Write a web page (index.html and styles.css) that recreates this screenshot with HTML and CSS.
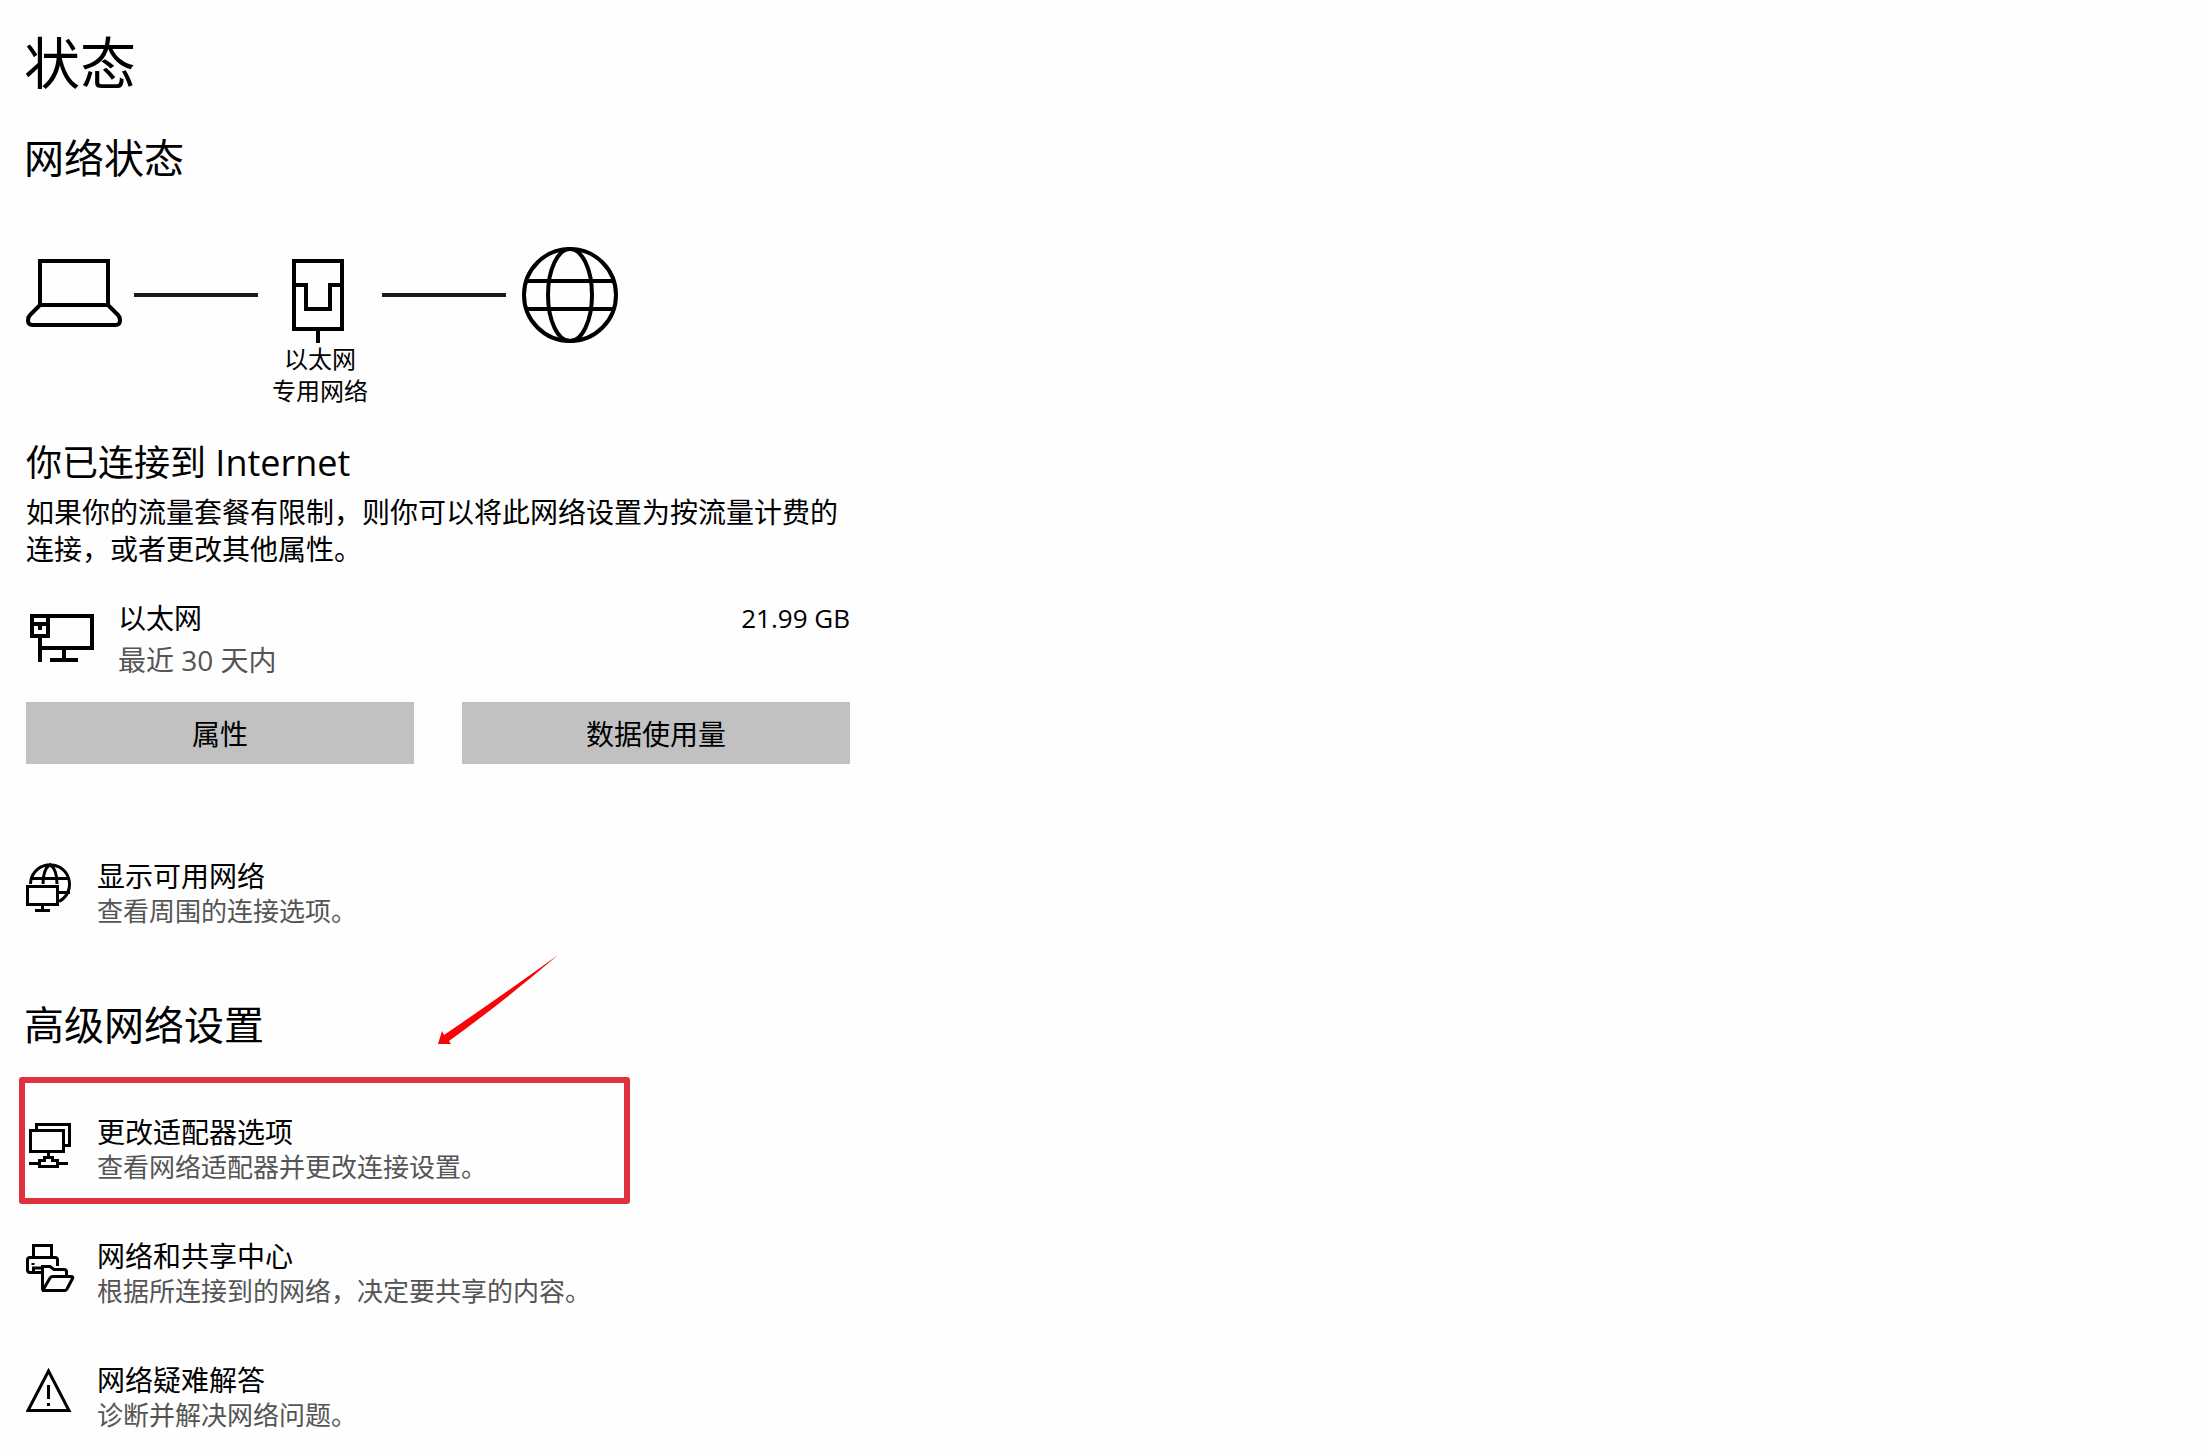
FILE: index.html
```html
<!DOCTYPE html>
<html lang="zh-CN">
<head>
<meta charset="utf-8">
<meta name="viewport" content="width=device-width, initial-scale=1">
<title>状态</title>
<link rel="stylesheet" href="styles.css">
</head>
<body>
<main class="page">
  <h1 class="page-title">状态</h1>

  <section class="status">
    <h2 class="section-title">网络状态</h2>

    <div class="diagram">
      <svg class="node-icon" width="96" height="96" viewBox="0 0 96 96" aria-hidden="true">
        <path d="M14 58V14h68v44M14 58h68l10 10Q94 70 94 73.500Q94 78 89.500 78H6.500Q2 78 2 73.500Q2 70 4 68z"/>
      </svg>
      <span class="wire"></span>
      <div class="node">
        <svg class="node-icon" width="96" height="96" viewBox="0 0 96 96" aria-hidden="true">
          <path d="M22 14h48v68H22zM22 38h12v24h24V38h12M46 82v14"/>
        </svg>
        <span>以太网</span>
        <span>专用网络</span>
      </div>
      <span class="wire"></span>
      <svg class="node-icon" width="104" height="96" viewBox="0 0 104 96" aria-hidden="true">
        <circle cx="52" cy="48" r="46"/>
        <ellipse cx="52" cy="48" rx="22" ry="46"/>
        <path d="M9 34h86M9 62h86"/>
      </svg>
    </div>

    <h3 class="connected">你已连接到 Internet</h3>
    <p class="hint">如果你的流量套餐有限制，则你可以将此网络设置为按流量计费的连接，或者更改其他属性。</p>

    <div class="usage">
      <svg class="usage-icon" width="72" height="84" viewBox="0 0 72 84" aria-hidden="true">
        <path d="M22 19h44v32H14M6 19h16v20H6zM6 27h16M14 27v6M14 39v26M38 51v12M24 63h28"/>
      </svg>
      <div class="usage-text">
        <span>以太网</span>
        <span class="muted">最近 30 天内</span>
      </div>
      <span class="usage-total">21.99 GB</span>
    </div>

    <div class="actions">
      <button type="button" class="button">属性</button>
      <button type="button" class="button">数据使用量</button>
    </div>
  </section>

  <a class="item" href="#networks">
    <svg class="item-icon" width="50" height="56" viewBox="0 0 50 56" aria-hidden="true">
      <path d="M4.500 26A19.500 19.500 0 1 1 33 43.500M17 26C17 17 19 10 24 6.500C29 10 31 17 31 26M5 20.500h38M33 34.500h11"/>
      <path d="M1.500 28.500h30v18h-30zM16.500 46v6M9 52.500h15"/>
    </svg>
    <span class="item-text">
      <span class="item-title">显示可用网络</span>
      <span class="item-desc">查看周围的连接选项。</span>
    </span>
  </a>

  <section class="advanced">
    <h2 class="section-title">高级网络设置</h2>
    <svg class="arrow" width="122" height="92" viewBox="0 0 122 92" aria-hidden="true">
      <path d="M1 90L5 77L7 81Q60 45 121 1Q66 48 12 87L14 90z"/>
    </svg>

    <nav class="items">
      <a class="item highlighted" href="#adapter">
        <svg class="item-icon" width="50" height="56" viewBox="0 0 50 56" aria-hidden="true">
          <path d="M10.500 16V10.500h33v21H38M4.500 16.500h33v21h-33zM22.500 37v6M3 49.500h10M33 49.500h9M13.500 46.500h5v-3h8v3h5v6h-18z"/>
        </svg>
        <span class="item-text">
          <span class="item-title">更改适配器选项</span>
          <span class="item-desc">查看网络适配器并更改连接设置。</span>
        </span>
      </a>
      <a class="item" href="#sharing">
        <svg class="item-icon" width="50" height="56" viewBox="0 0 50 56" aria-hidden="true">
          <path d="M7.500 19V7.500h18V19M16 34.500H4Q1.500 34.500 1.500 32V22Q1.500 19.500 4 19.500H29Q31.500 19.500 31.500 22V28M16 30H7.500V34M7 25v2"/>
          <path d="M16.500 52.500V28.500H24L28 31.500H38Q40.500 31.500 40.500 34V38M17 52L24 40Q25 38.500 27 38.500H45Q47.500 38.500 46.500 40.500L41 51Q40 52.500 38.500 52.500H16"/>
        </svg>
        <span class="item-text">
          <span class="item-title">网络和共享中心</span>
          <span class="item-desc">根据所连接到的网络，决定要共享的内容。</span>
        </span>
      </a>
      <a class="item" href="#troubleshoot">
        <svg class="item-icon" width="50" height="56" viewBox="0 0 50 56" aria-hidden="true">
          <path d="M22.500 9L43 48.500H2zM22.500 23v14M22.500 41v3"/>
        </svg>
        <span class="item-text">
          <span class="item-title">网络疑难解答</span>
          <span class="item-desc">诊断并解决网络问题。</span>
        </span>
      </a>
    </nav>
  </section>
</main>
</body>
</html>
```
FILE: styles.css
```css
*,
*::before {
  box-sizing: border-box;
}

body {
  margin: 0;
  background: #fefefe;
  color: #000;
  font-family: "Open Sans", "Noto Sans CJK SC", sans-serif;
  font-size: 28px;
}

h1,
h2,
h3,
p {
  margin: 0;
  font-weight: 400;
}

svg {
  display: block;
  flex: none;
  fill: none;
  stroke: #000;
}

.page {
  max-width: 876px;
  padding: 24px 26px 20px;
}

.page-title,
.section-title {
  margin-left: -2px;
}

.page-title {
  font-size: 56px;
  line-height: 76px;
}

.section-title {
  font-size: 40px;
  line-height: 56px;
}

.status .section-title {
  margin-top: 30px;
}

.diagram {
  display: flex;
  align-items: flex-start;
  gap: 12px;
  margin-top: 61px;
}

.node-icon {
  stroke-width: 4px;
}

.node {
  display: flex;
  flex-direction: column;
  align-items: center;
  width: 100px;
  font-size: 24px;
  line-height: 32px;
}

.wire {
  width: 124px;
  height: 4px;
  margin-top: 46px;
  background: #1a1a1a;
}

.connected {
  margin-top: 32px;
  font-size: 36px;
  line-height: 48px;
}

.hint {
  margin-top: 7px;
  line-height: 37px;
}

.usage {
  display: flex;
  gap: 20px;
  margin-top: 29px;
  line-height: 42px;
}

.usage-icon {
  stroke-width: 4px;
}

.usage-text {
  display: flex;
  flex: 1;
  flex-direction: column;
}

.usage-total {
  font-size: 26px;
}

.muted {
  color: #555;
}

.actions {
  display: grid;
  grid-template-columns: 1fr 1fr;
  gap: 48px;
  margin-top: 21px;
}

.button {
  height: 62px;
  padding: 0;
  border: 0;
  background: #c1c1c1;
  color: #000;
  font: inherit;
}

.item {
  position: relative;
  display: flex;
  gap: 21px;
  color: #000;
  text-decoration: none;
}

.status + .item {
  margin-top: 94px;
}

.item-icon {
  stroke-width: 3px;
}

.item-text {
  display: flex;
  flex-direction: column;
}

.item-title {
  line-height: 36px;
}

.item-desc {
  color: #555;
  font-size: 26px;
  line-height: 34px;
}

.advanced {
  position: relative;
  margin-top: 69px;
}

.arrow {
  position: absolute;
  top: -43px;
  left: 411px;
  fill: #f60409;
  stroke: none;
}

.items {
  display: flex;
  flex-direction: column;
  gap: 54px;
  margin-top: 61px;
}

.highlighted::before {
  content: "";
  position: absolute;
  top: -37px;
  left: -7px;
  width: 611px;
  height: 127px;
  border: 6px solid #dd323e;
  border-radius: 3px;
}
```
